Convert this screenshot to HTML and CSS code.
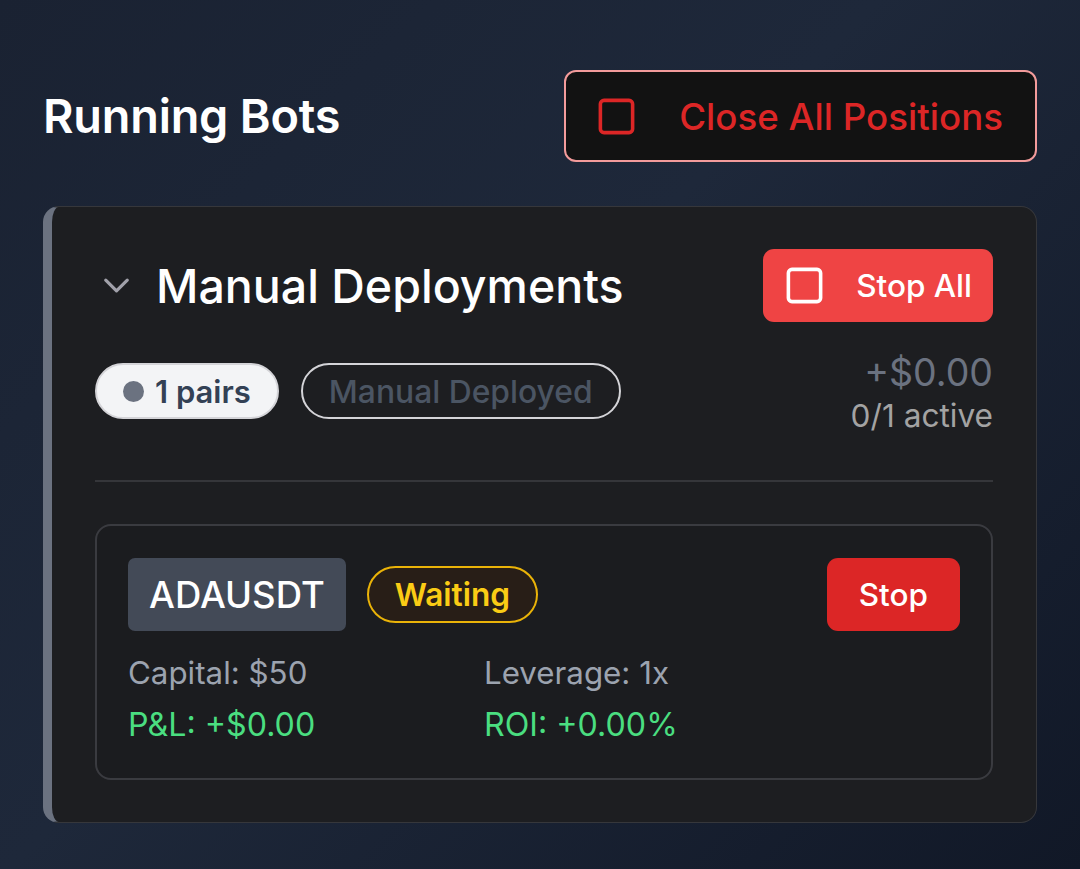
FILE: index.html
```html
<!DOCTYPE html>
<html lang="en">
<head>
<meta charset="utf-8">
<title>Running Bots</title>
<link rel="stylesheet" href="styles.css">
</head>
<body>
<main class="page">
  <header class="top">
    <h1 class="title">Running Bots</h1>
    <button class="btn-close-all">
      <svg class="ico" viewBox="0 0 24 24" fill="none" stroke="currentColor" stroke-width="2" stroke-linecap="round" stroke-linejoin="round"><rect x="3" y="3" width="18" height="18" rx="2"/></svg>
      <span>Close All Positions</span>
    </button>
  </header>

  <section class="group">
    <div class="group-head">
      <div class="group-title">
        <svg class="chev" viewBox="0 0 24 24" fill="none" stroke="currentColor" stroke-width="2" stroke-linecap="round" stroke-linejoin="round"><path d="m6 9 6 6 6-6"/></svg>
        <h2>Manual Deployments</h2>
      </div>
      <button class="btn-stop-all">
        <svg class="ico" viewBox="0 0 24 24" fill="none" stroke="currentColor" stroke-width="2" stroke-linecap="round" stroke-linejoin="round"><rect x="3" y="3" width="18" height="18" rx="2"/></svg>
        <span>Stop All</span>
      </button>
    </div>

    <div class="group-meta">
      <div class="pills">
        <span class="pill pill-light"><span class="dot"></span>1 pairs</span>
        <span class="pill pill-outline">Manual Deployed</span>
      </div>
      <div class="stats">
        <div class="pnl">+$0.00</div>
        <div class="active">0/1 active</div>
      </div>
    </div>

    <hr class="divider">

    <div class="bot">
      <div class="bot-head">
        <div class="bot-tags">
          <span class="symbol">ADAUSDT</span>
          <span class="status">Waiting</span>
        </div>
        <button class="btn-stop">Stop</button>
      </div>
      <div class="bot-grid">
        <span class="muted">Capital: $50</span>
        <span class="muted">Leverage: 1x</span>
        <span class="green">P&amp;L: +$0.00</span>
        <span class="green">ROI: +0.00%</span>
      </div>
    </div>
  </section>
</main>
</body>
</html>
```

FILE: styles.css
```css
* { box-sizing: border-box; }
html, body { margin: 0; height: 100%; }
body {
  font-family: Inter, "Noto Sans", sans-serif;
  background: linear-gradient(135deg, #1a2232 0%, #1e283a 45%, #111827 100%);
  color: #fff;
  min-height: 869px;
}
.page {
  padding: 70px 43px 43px 43px;
}
.top {
  display: flex;
  justify-content: space-between;
  align-items: center;
  height: 92px;
}
.title {
  margin: 0;
  font-size: 46.8px;
  font-weight: 600;
  letter-spacing: -0.2px;
}
button { font-family: inherit; cursor: pointer; }
.ico { display: block; }
.btn-close-all {
  display: flex;
  align-items: center;
  height: 92px;
  padding: 0 32px 0 29px;
  gap: 41px;
  background: #121212;
  border: 2px solid #f39b9b;
  border-radius: 12px;
  color: #dc2626;
  font-size: 36.7px;
  font-weight: 500;
}
.btn-close-all .ico { width: 43px; height: 43px; }

.group {
  margin-top: 44px;
  background: #1d1e21;
  border: 1.5px solid #36373b;
  border-left: 9px solid #6b7280;
  border-radius: 16px;
  padding: 42px 43px 42px 43px;
}
.group-head {
  display: flex;
  justify-content: space-between;
  align-items: center;
}
.group-title {
  display: flex;
  align-items: center;
  gap: 18px;
}
.chev { width: 43px; height: 43px; color: #a1a1aa; stroke-width: 1.8; }
.group-title h2 {
  margin: 0;
  font-size: 46.5px;
  font-weight: 500;
}
.btn-stop-all {
  display: flex;
  align-items: center;
  height: 73px;
  padding: 0 21px 0 20px;
  gap: 30px;
  background: #ef4444;
  border: 0;
  border-radius: 11px;
  color: #fff;
  font-size: 31.5px;
  font-weight: 500;
}
.btn-stop-all .ico { width: 43px; height: 43px; }

.group-meta {
  display: flex;
  justify-content: space-between;
  align-items: flex-start;
  margin-top: 29px;
}
.pills {
  display: flex;
  gap: 22px;
  margin-top: 12px;
}
.pill {
  display: inline-flex;
  align-items: center;
  height: 56px;
  padding: 0 26px;
  border-radius: 999px;
  font-size: 31.8px;
  font-weight: 500;
}
.pill-light {
  background: #f3f4f6;
  border: 2px solid #d4d4d8;
  color: #334155;
  font-weight: 600;
  font-size: 31px;
  gap: 11px;
}
.dot {
  width: 21px; height: 21px;
  border-radius: 50%;
  background: #6b7280;
}
.pill-outline {
  border: 2px solid #d4d4d8;
  color: #4b5563;
}
.stats {
  text-align: right;
}
.pnl {
  font-size: 37.5px;
  color: #6b7280;
  line-height: 44px;
}
.active {
  font-size: 31.6px;
  color: #a3a3a3;
  line-height: 42px;
}
.divider {
  margin: 43px 0 0 0;
  border: 0;
  border-top: 2px solid #35363a;
}
.bot {
  margin-top: 42px;
  border: 2px solid #3a3b40;
  border-radius: 16px;
  background: #1b1c1f;
  padding: 32px 31px 31px 31px;
}
.bot-head {
  display: flex;
  justify-content: space-between;
  align-items: center;
}
.bot-tags {
  display: flex;
  align-items: center;
  gap: 21px;
}
.symbol {
  display: inline-flex;
  align-items: center;
  height: 73px;
  padding: 0 21px;
  background: #434a57;
  border-radius: 7px;
  font-size: 36.5px;
  font-weight: 500;
  color: #fff;
}
.status {
  display: inline-flex;
  align-items: center;
  height: 57px;
  padding: 0 26px;
  border: 2px solid #eab308;
  border-radius: 999px;
  background: #281e17;
  color: #facc15;
  font-size: 31.6px;
  font-weight: 600;
}
.btn-stop {
  height: 73px;
  padding: 0 32px;
  background: #dc2626;
  border: 0;
  border-radius: 11px;
  color: #fff;
  font-size: 31.5px;
  font-weight: 500;
}
.bot-grid {
  display: grid;
  grid-template-columns: 356px 1fr;
  margin-top: 20px;
  row-gap: 8px;
  font-size: 31.3px;
  line-height: 44px;
}
.muted { color: #9ca3af; }
.green { color: #4ade80; font-size: 32.2px; }
```
